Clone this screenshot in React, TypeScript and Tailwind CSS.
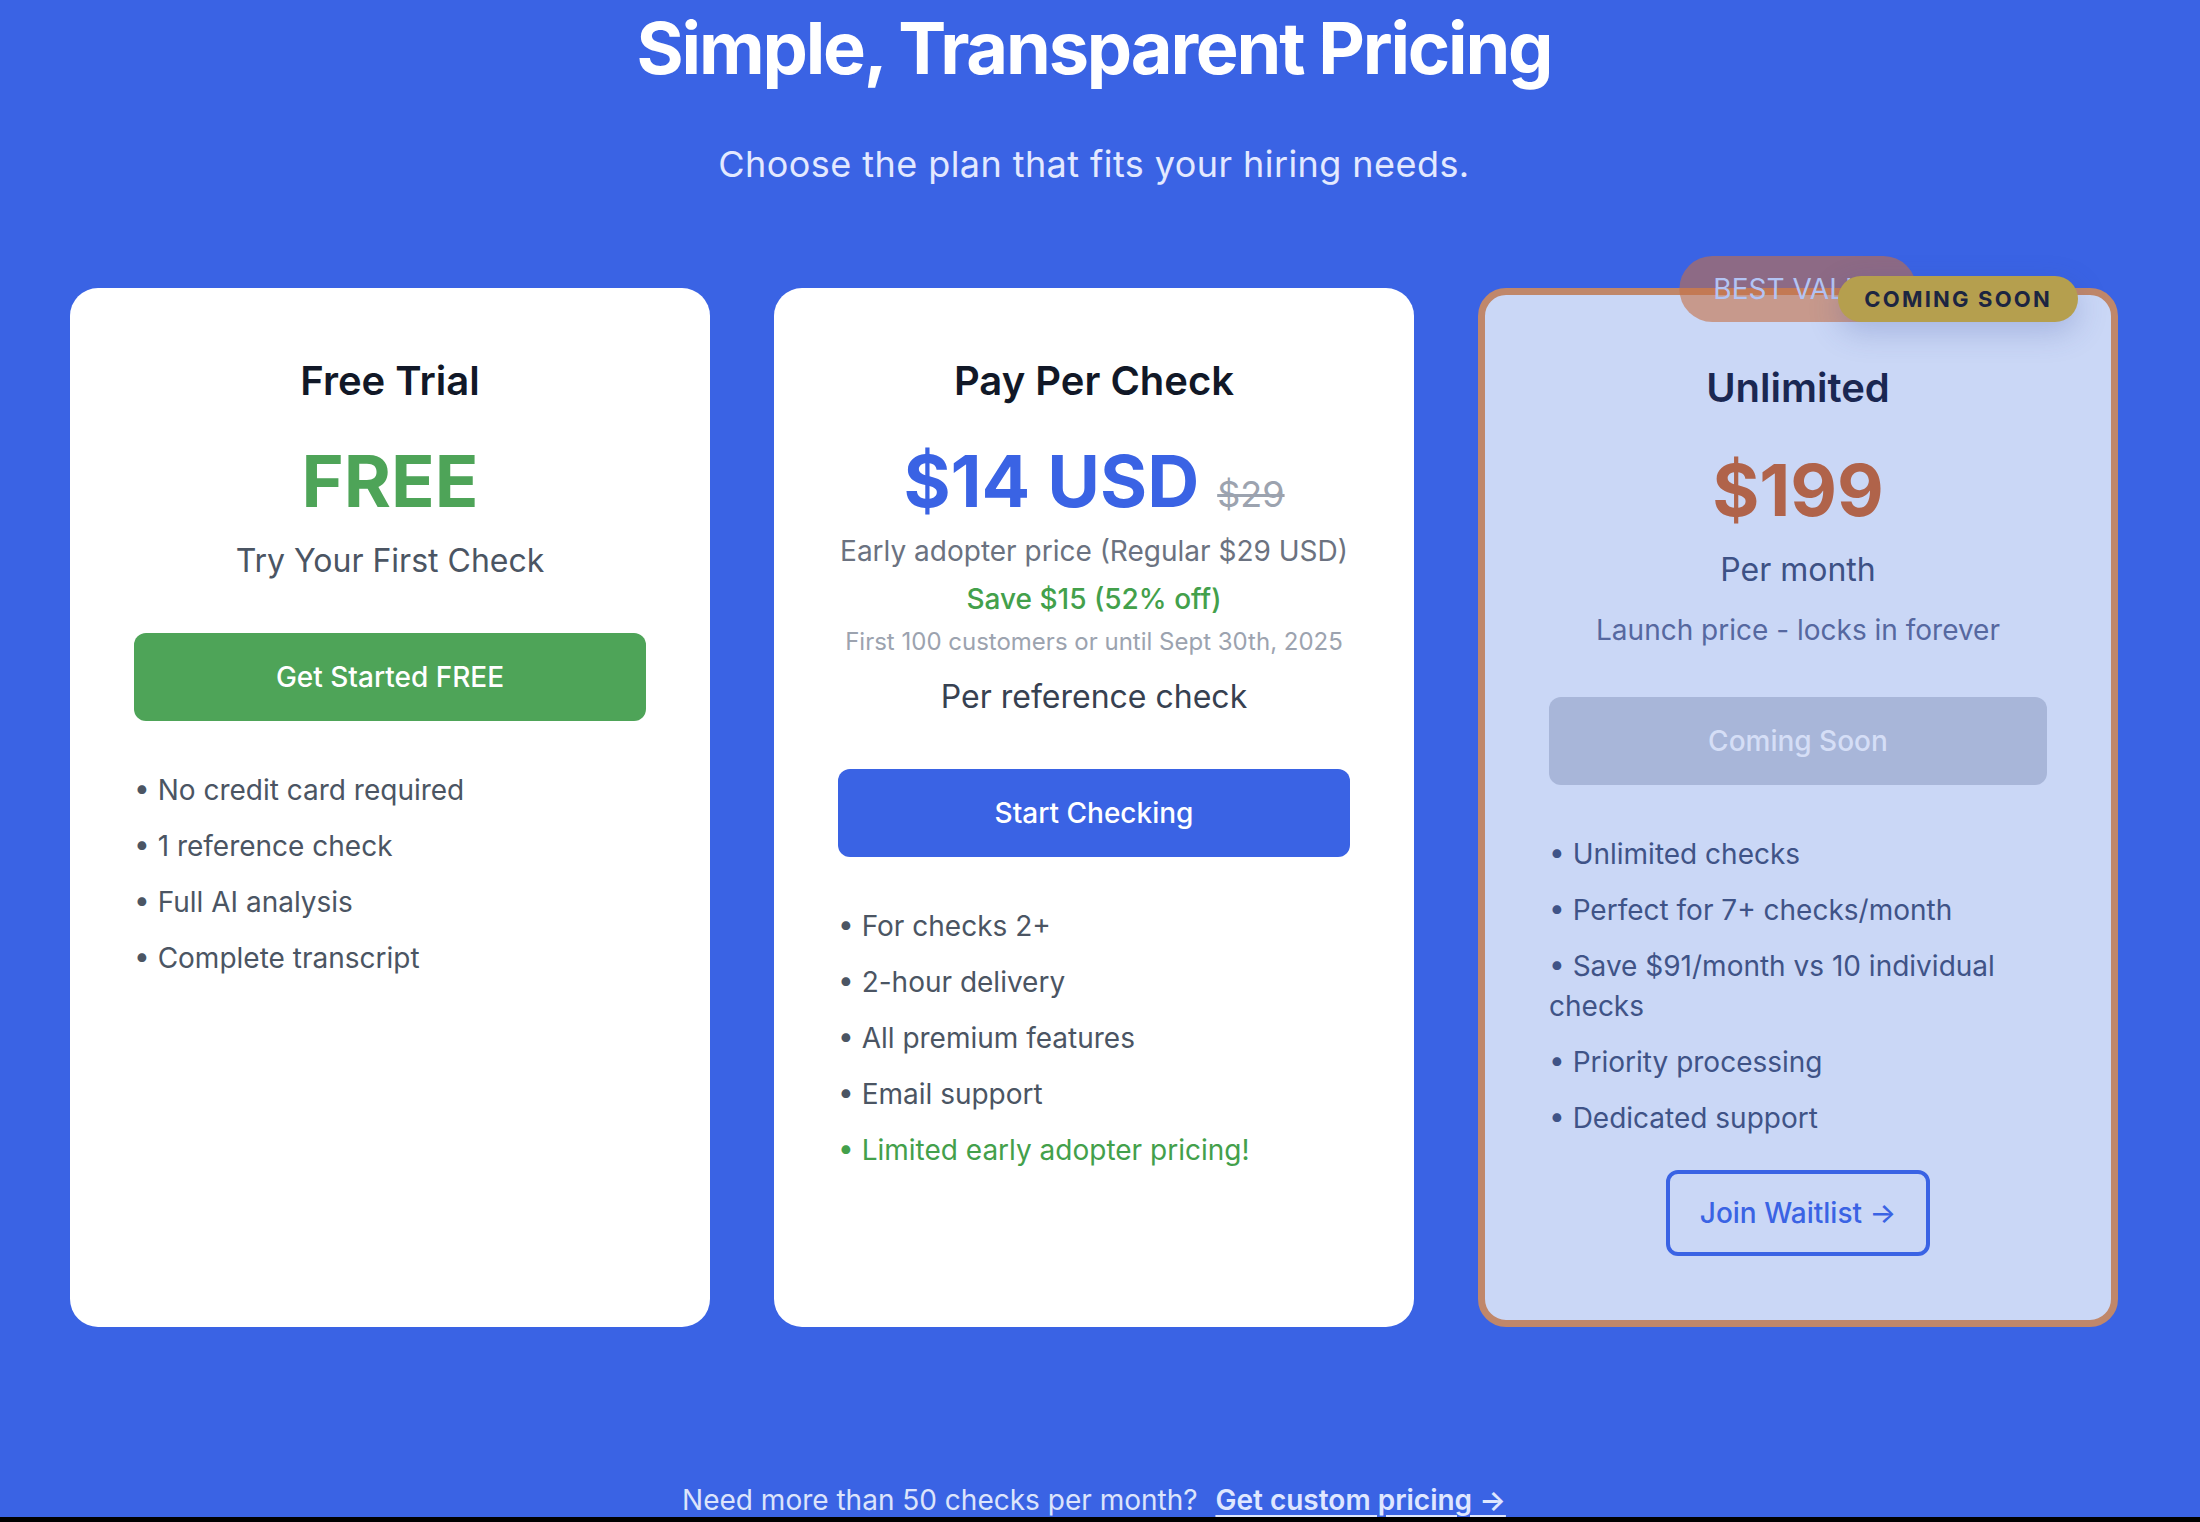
import React from "react";

function Feature({
  children,
  className = "text-[#4b5563]",
}: {
  children: React.ReactNode;
  className?: string;
}) {
  return <li className={`text-[28px] leading-[40px] ${className}`}>• {children}</li>;
}

function Card({
  children,
  className = "",
}: {
  children: React.ReactNode;
  className?: string;
}) {
  return (
    <div className={`relative rounded-[28px] p-[64px] text-center ${className}`}>
      {children}
    </div>
  );
}

export default function App() {
  return (
    <div className="h-[1522px] bg-black font-['Inter',sans-serif]">
      <div className="h-[1517px] overflow-hidden bg-[#3a63e4] pr-[12px]">
        <div className="mx-auto w-[2048px] pt-[8px]">
          <h1 className="text-center text-[72px] font-bold leading-[80px] tracking-[-0.03em] text-white">
            Simple, Transparent Pricing
          </h1>
          <p className="mt-[48px] text-center text-[36px] leading-[56px] tracking-[0.012em] text-[#e3e9ff]">
            Choose the plan that fits your hiring needs.
          </p>

          <div className="mt-[96px] grid grid-cols-3 gap-[64px]">
            {/* free */}
            <Card className="bg-white pt-[65px]">
              <h3 className="text-[40px] font-semibold leading-[56px] text-[#111827]">Free Trial</h3>
              <div className="mt-[32px] text-[72px] font-bold leading-[80px] text-[#4ea458]">FREE</div>
              <p className="mt-[16px] text-[32px] leading-[48px] text-[#4b5563]">Try Your First Check</p>
              <button className="mt-[48px] h-[88px] w-full rounded-[12px] bg-[#4ea458] text-[28px] font-medium text-white">
                Get Started FREE
              </button>
              <ul className="mt-[49px] flex flex-col gap-[16px] text-left">
                <Feature>No credit card required</Feature>
                <Feature>1 reference check</Feature>
                <Feature>Full AI analysis</Feature>
                <Feature>Complete transcript</Feature>
              </ul>
            </Card>

            {/* pay per check */}
            <Card className="bg-white pt-[65px]">
              <h3 className="text-[40px] font-semibold leading-[56px] text-[#111827]">Pay Per Check</h3>
              <div className="mt-[32px] flex items-baseline justify-center">
                <span className="text-[72px] font-bold leading-[80px] text-[#3a63e4]">$14 USD</span>
                <span className="ml-[18px] text-[36px] leading-[56px] text-[#9ca3af] line-through">$29</span>
              </div>
              <p className="mt-[9px] text-[28px] leading-[40px] text-[#6b7280]">
                Early adopter price (Regular $29 USD)
              </p>
              <p className="mt-[8px] text-[28px] font-medium leading-[40px] text-[#43a04b]">
                Save $15 (52% off)
              </p>
              <p className="mt-[7px] text-[24px] leading-[32px] text-[#9ca3af]">
                First 100 customers or until Sept 30th, 2025
              </p>
              <p className="mt-[15px] text-[32px] leading-[48px] text-[#374151]">Per reference check</p>
              <button className="mt-[48px] h-[88px] w-full rounded-[12px] bg-[#3a63e4] text-[28px] font-medium text-white">
                Start Checking
              </button>
              <ul className="mt-[49px] flex flex-col gap-[16px] text-left">
                <Feature>For checks 2+</Feature>
                <Feature>2-hour delivery</Feature>
                <Feature>All premium features</Feature>
                <Feature>Email support</Feature>
                <Feature className="text-[#43a04b]">Limited early adopter pricing!</Feature>
              </ul>
            </Card>

            {/* unlimited */}
            <Card className="border-[7px] border-[#c0876a] bg-[#cad7f6]">
              <span className="absolute left-1/2 top-[-39px] -translate-x-1/2 whitespace-nowrap rounded-full bg-[rgba(196,112,70,0.6)] px-[34px] py-[13px] text-[28px] leading-[40px] text-[#b3c4f4]">
                BEST VALUE
              </span>
              <span className="absolute right-[33px] top-[-19px] whitespace-nowrap rounded-full bg-[#b59f4e] px-[26px] py-[8px] text-[22px] font-bold leading-[30px] tracking-[0.1em] text-[#1c2541] shadow-[0_10px_30px_rgba(60,80,160,0.25)]">
                COMING SOON
              </span>
              <h3 className="mt-[1px] text-[40px] font-semibold leading-[56px] text-[#1a2752]">Unlimited</h3>
              <div className="mt-[34px] text-[72px] font-bold leading-[80px] text-[#b0634a]">$199</div>
              <p className="mt-[16px] text-[32px] leading-[48px] text-[#3d5185]">Per month</p>
              <p className="mt-[16px] text-[28px] leading-[40px] text-[#5668a0]">
                Launch price - locks in forever
              </p>
              <button className="mt-[47px] h-[88px] w-full rounded-[12px] bg-[#a8b6d9] text-[28px] font-medium text-[#d5def6]">
                Coming Soon
              </button>
              <ul className="mt-[49px] flex flex-col gap-[16px] text-left">
                <Feature className="text-[#3f5387]">Unlimited checks</Feature>
                <Feature className="text-[#3f5387]">Perfect for 7+ checks/month</Feature>
                <Feature className="text-[#3f5387]">Save $91/month vs 10 individual checks</Feature>
                <Feature className="text-[#3f5387]">Priority processing</Feature>
                <Feature className="text-[#3f5387]">Dedicated support</Feature>
              </ul>
              <button className="mx-auto mt-[32px] flex h-[86px] w-[264px] items-center justify-center rounded-[12px] border-[4px] border-[#3a63e4] text-[28px] font-medium text-[#3a63e4]">
                Join Waitlist →
              </button>
            </Card>
          </div>

          <p className="mt-[153px] text-center text-[28px] leading-[40px] text-[#dce4fb]">
            Need more than 50 checks per month?{" "}
            <a className="ml-[10px] font-semibold text-[#dfe7ff] underline underline-offset-[5px]">
              Get custom pricing →
            </a>
          </p>
        </div>
      </div>
    </div>
  );
}
